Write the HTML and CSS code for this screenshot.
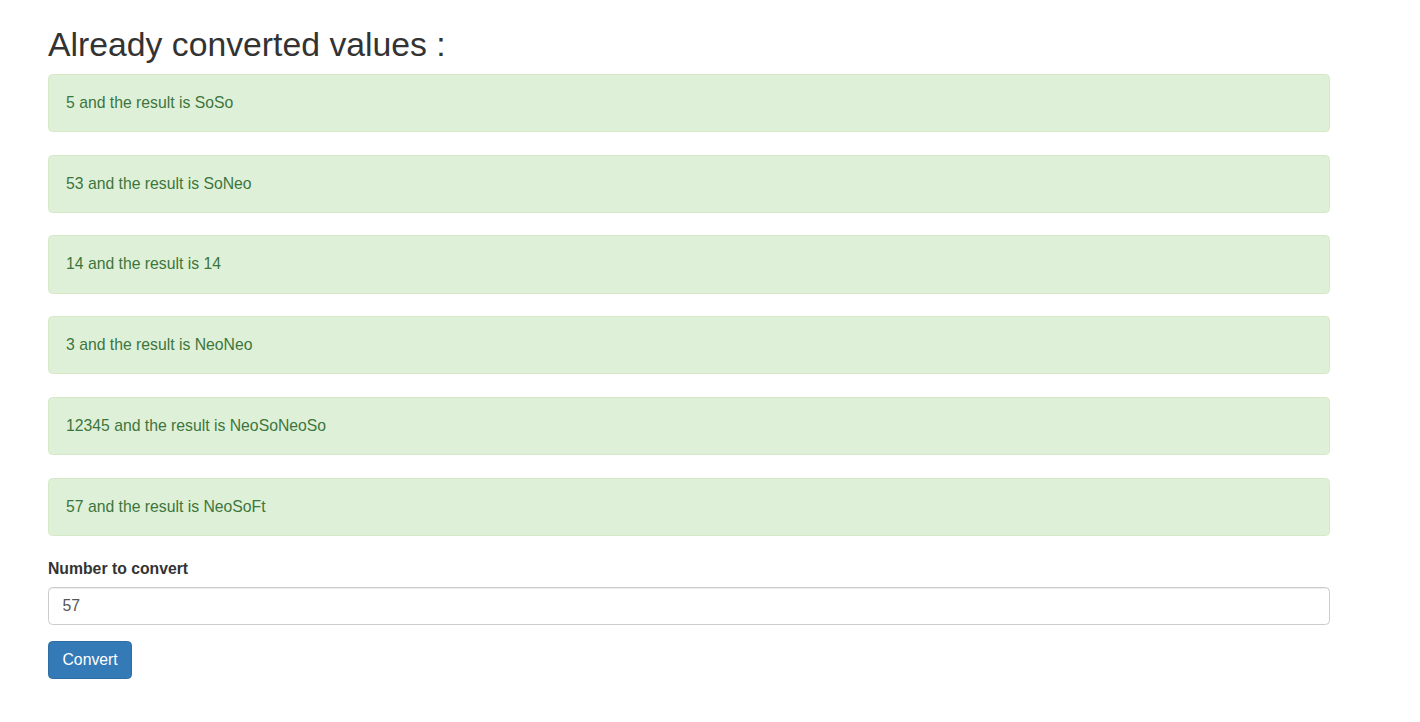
FILE: index.html
```html
<!DOCTYPE html>
<html>
<head>
<meta charset="utf-8">
<title>Converter</title>
<link rel="stylesheet" href="styles.css">
</head>
<body>
<div class="container">
  <h2 class="title">Already converted values :</h2>
  <div class="alert">5 and the result is SoSo</div>
  <div class="alert">53 and the result is SoNeo</div>
  <div class="alert">14 and the result is 14</div>
  <div class="alert">3 and the result is NeoNeo</div>
  <div class="alert">12345 and the result is NeoSoNeoSo</div>
  <div class="alert">57 and the result is NeoSoFt</div>
  <form class="form">
    <div class="form-group">
      <label class="label" for="num">Number to convert</label>
      <input class="input" id="num" type="text" value="57">
    </div>
    <button class="btn" type="button">Convert</button>
  </form>
</div>
</body>
</html>
```
FILE: styles.css
```css
html, body {
  margin: 0;
  padding: 0;
  background: #fff;
}
body {
  font-family: "Liberation Sans", Arial, Helvetica, sans-serif;
  font-size: 15.75px;
  line-height: 22.5px;
  color: #333;
}
.container {
  width: 1282px;
  padding: 25.6px 0 0 48px;
}
.title {
  font-size: 33.75px;
  font-weight: 500;
  line-height: 37.1px;
  margin: 0 0 11.25px;
  color: #333;
}
.alert {
  background: #dff0d8;
  border: 1px solid #d6e9c6;
  color: #3c763d;
  border-radius: 4.5px;
  padding: 16.875px 17px;
  margin-bottom: 22.5px;
}
.form {
  margin: 0;
}
.form-group {
  margin-bottom: 16.4px;
}
.label {
  display: block;
  font-weight: bold;
  margin-bottom: 5.6px;
  color: #333;
}
.input {
  display: block;
  box-sizing: border-box;
  width: 100%;
  height: 38.25px;
  padding: 6.75px 13.5px;
  font-family: inherit;
  font-size: 15.75px;
  line-height: 22.5px;
  color: #555;
  background: #fff;
  border: 1px solid #ccc;
  border-radius: 4.5px;
  box-shadow: inset 0 1px 1px rgba(0,0,0,0.075);
  margin: 0;
}
.btn {
  display: inline-block;
  box-sizing: border-box;
  height: 38px;
  padding: 6.75px 13.5px;
  font-family: inherit;
  font-size: 15.75px;
  line-height: 22.5px;
  color: #fff;
  background: #337ab7;
  border: 1px solid #2e6da4;
  border-radius: 4.5px;
  margin: 0;
}
```
